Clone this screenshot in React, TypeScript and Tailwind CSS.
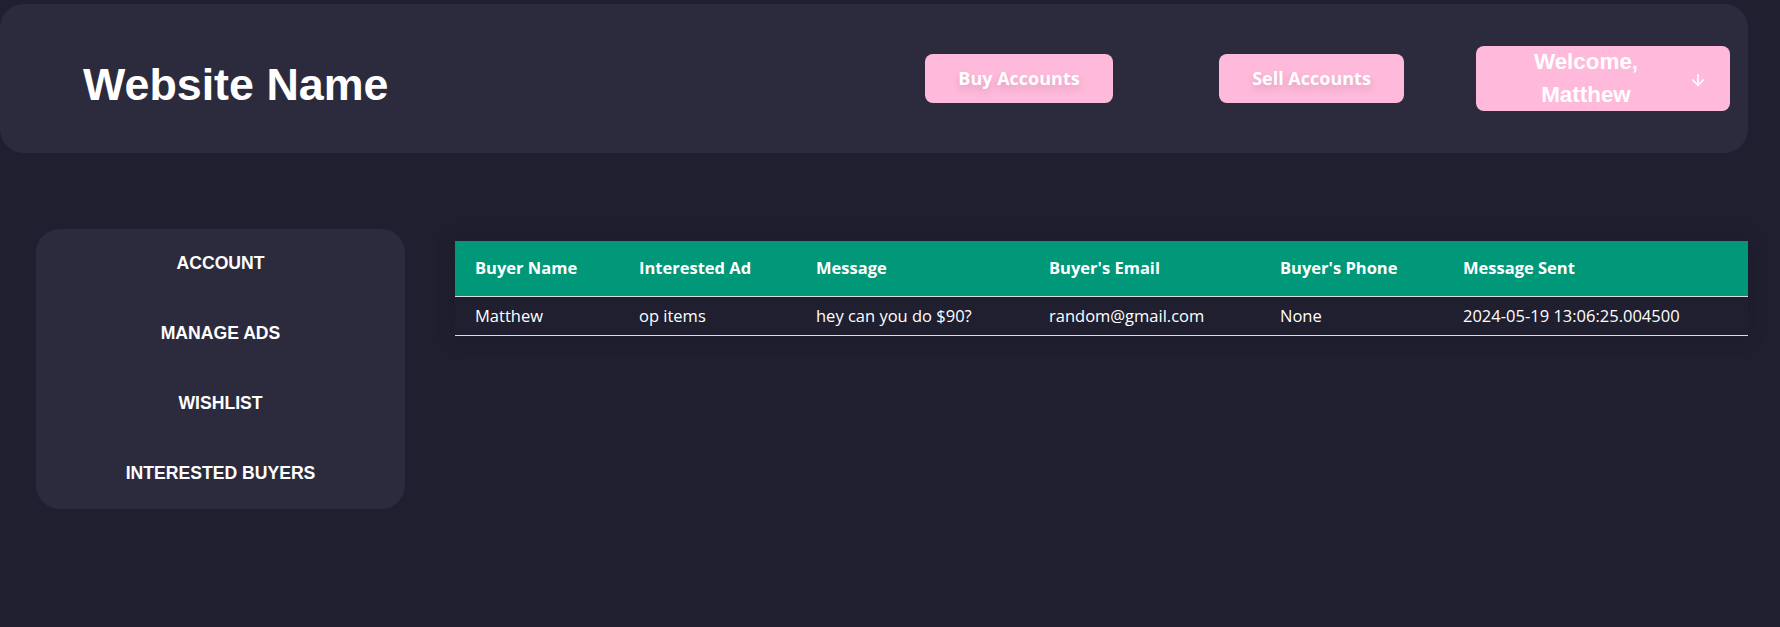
import { ArrowDown } from "lucide-react";

const navButtons = [
  { label: "Buy Accounts", className: "w-[188px] ml-auto" },
  { label: "Sell Accounts", className: "w-[185px] ml-[106px]" },
];

const sideItems = ["Account", "Manage Ads", "Wishlist", "Interested Buyers"];

const columns = [
  { name: "Buyer Name", width: "w-[164px]" },
  { name: "Interested Ad", width: "w-[177px]" },
  { name: "Message", width: "w-[233px]" },
  { name: "Buyer's Email", width: "w-[231px]" },
  { name: "Buyer's Phone", width: "w-[183px]" },
  { name: "Message Sent", width: "w-auto" },
];

const rows = [
  {
    buyer: "Matthew",
    ad: "op items",
    message: "hey can you do $90?",
    email: "random@gmail.com",
    phone: "None",
    sent: "2024-05-19 13:06:25.004500",
  },
];

function Header() {
  return (
    <header className="mt-1 mr-8 flex h-[149px] items-center rounded-3xl bg-[#2c2b3e] pr-[18px]">
      <h1 className="mt-3 pl-[83px] font-['Liberation_Sans',Arial,sans-serif] text-[44.8px] font-bold leading-none text-white">
        Website Name
      </h1>

      {navButtons.map((btn) => (
        <button
          key={btn.label}
          className={`${btn.className} h-[49px] rounded-lg bg-[#ffb9db] font-['Open_Sans',sans-serif] text-[18px] font-bold text-white [text-shadow:0_4px_8px_rgba(0,0,0,0.14)]`}
        >
          {btn.label}
        </button>
      ))}

      {/* user dropdown */}
      <button className="ml-[72px] flex h-[65px] w-[254px] items-center rounded-lg bg-[#ffb9db] pl-[40px] pr-[23px] text-white">
        <span className="w-[140px] text-center font-['Liberation_Sans',Arial,sans-serif] text-[22.4px] font-bold leading-[32.4px]">
          <span className="block">Welcome,</span>
          <span className="block">Matthew</span>
        </span>
        <ArrowDown className="ml-auto mt-[3px] h-[18px] w-[18px]" strokeWidth={2.2} />
      </button>
    </header>
  );
}

function Sidebar() {
  return (
    <aside className="flex h-[280px] w-[369px] shrink-0 flex-col items-center gap-[50px] rounded-3xl bg-[#2c2b3e] pt-6">
      {sideItems.map((item) => (
        <a
          key={item}
          href="#"
          className="block font-['Liberation_Sans',Arial,sans-serif] text-[17.6px] font-bold uppercase leading-5 text-white"
        >
          {item}
        </a>
      ))}
    </aside>
  );
}

function BuyersTable() {
  return (
    <table className="mt-3 w-full table-fixed font-['Open_Sans',sans-serif] text-[16.5px] text-white shadow-[0_0_20px_rgba(0,0,0,0.15)]">
      <thead>
        <tr className="border-b border-[#dddddd] bg-[#009879] text-left">
          {columns.map((col) => (
            <th key={col.name} className={`${col.width} h-[55px] py-0 pl-5 font-bold`}>
              {col.name}
            </th>
          ))}
        </tr>
      </thead>
      <tbody>
        {rows.map((row) => (
          <tr key={row.sent} className="border-b border-[#dddddd]">
            <td className="h-[39px] py-0 pl-5 pt-[2px]">{row.buyer}</td>
            <td className="py-0 pl-5 pt-[2px]">{row.ad}</td>
            <td className="py-0 pl-5 pt-[2px]">{row.message}</td>
            <td className="py-0 pl-5 pt-[2px]">{row.email}</td>
            <td className="py-0 pl-5 pt-[2px]">{row.phone}</td>
            <td className="py-0 pl-5 pt-[2px]">{row.sent}</td>
          </tr>
        ))}
      </tbody>
    </table>
  );
}

export default function App() {
  return (
    <div className="h-[627px] w-full overflow-hidden bg-[#201f30]">
      <Header />
      <main className="mt-[76px] flex items-start gap-[50px] pl-9 pr-8">
        <Sidebar />
        <div className="flex-1">
          <BuyersTable />
        </div>
      </main>
    </div>
  );
}
